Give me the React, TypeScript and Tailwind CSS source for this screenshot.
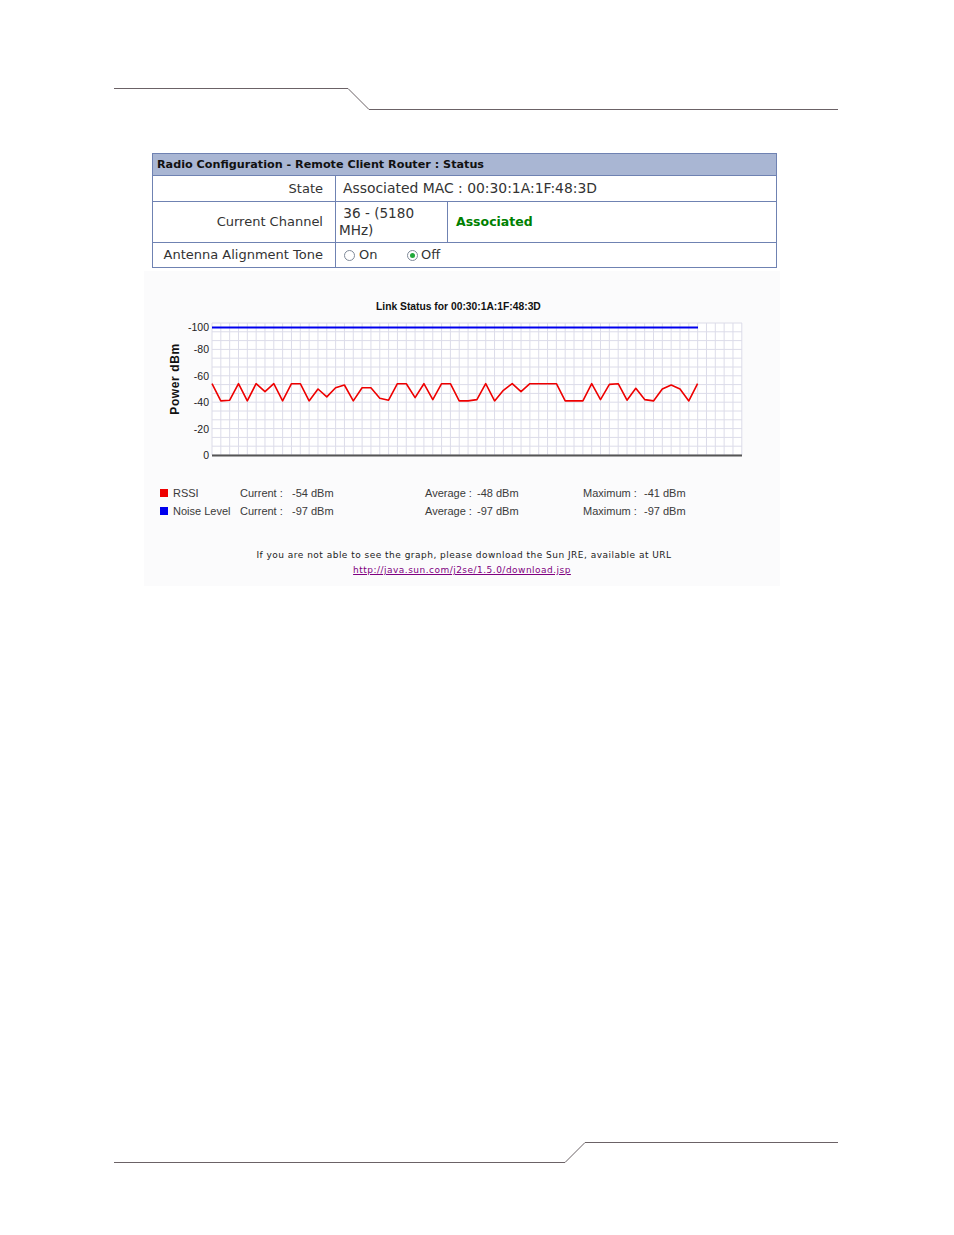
import React from 'react';

const rssi = [
  -54, -41, -41.5, -54, -41, -54, -48, -54, -41, -54, -54, -41, -50, -44, -51, -53, -41, -51, -51, -43,
  -41.5, -54, -54, -43.5, -54, -42, -54, -54, -41, -41, -42, -54, -41, -49, -54, -48, -54, -54, -54, -54,
  -41, -41, -41, -54, -42, -53.5, -54, -41.5, -50.5, -42, -41, -50, -53, -50, -41, -54,
];

const X0 = 212;
const STEP = 8.83;
const yOf = (v: number) => 454 + v * 1.32;

const LinkChart: React.FC = () => {
  const vLines = Array.from({ length: 61 }, (_, i) => X0 + i * STEP);
  const hLines = Array.from({ length: 16 }, (_, i) => 322 + i * 8.8);
  const redPts = rssi.map((v, i) => `${(X0 + i * STEP).toFixed(1)},${yOf(v).toFixed(1)}`).join(' ');
  const ticks = [
    { label: '-100', y: 326 },
    { label: '-80', y: 348.4 },
    { label: '-60', y: 374.8 },
    { label: '-40', y: 401.2 },
    { label: '-20', y: 427.6 },
    { label: '0', y: 454 },
  ];

  return (
    <svg width="636" height="150" viewBox="144 315 636 150" className="block">
      <rect x={X0} y={322} width={530} height={132} fill="#ffffff" />
      {vLines.map((x, i) => (
        <line key={`v${i}`} x1={x} y1={322} x2={x} y2={454} stroke="#dcdce9" strokeWidth="1" />
      ))}
      {hLines.map((y, i) => (
        <line key={`h${i}`} x1={X0} y1={y} x2={742} y2={y} stroke="#dcdce9" strokeWidth="1" />
      ))}
      <line x1={X0} y1={454.5} x2={742} y2={454.5} stroke="#555555" strokeWidth="2" />
      <line x1={X0} y1={326.5} x2={698} y2={326.5} stroke="#0000ee" strokeWidth="2" />
      <polyline points={redPts} fill="none" stroke="#ee0000" strokeWidth="1.6" strokeLinejoin="round" />
      {ticks.map((t) => (
        <text
          key={t.label}
          x={209}
          y={t.y + 4}
          textAnchor="end"
          fontSize="10.5"
          fill="#222"
          fontFamily="'Liberation Sans', Arial, sans-serif"
        >
          {t.label}
        </text>
      ))}
      <text
        x={179}
        y={378}
        transform="rotate(-90 179 378)"
        textAnchor="middle"
        fontSize="12"
        fontWeight="bold"
        fill="#111"
        letterSpacing="0.6"
        fontFamily="'Liberation Sans', Arial, sans-serif"
      >
        Power dBm
      </text>
    </svg>
  );
};

const Radio: React.FC<{ checked?: boolean }> = ({ checked }) => (
  <span className="inline-flex items-center justify-center w-[11px] h-[11px] rounded-full border border-[#7f8a99] bg-white">
    {checked && <span className="w-[5px] h-[5px] rounded-full bg-[#22a83a]" />}
  </span>
);

const LegendRow: React.FC<{ color: string; name: string; cur: string; avg: string; max: string }> = ({
  color,
  name,
  cur,
  avg,
  max,
}) => (
  <div className="flex items-center h-[18px] pl-4 text-[11px] text-[#3a3a3a]">
    <span className={`w-[8px] h-[8px] ${color}`} />
    <span className="w-[72px] pl-[5px]">{name}</span>
    <span className="w-[52px]">Current :</span>
    <span className="w-[133px]">{cur}</span>
    <span className="w-[52px]">Average :</span>
    <span className="w-[106px]">{avg}</span>
    <span className="w-[61px]">Maximum :</span>
    <span>{max}</span>
  </div>
);

export default function App() {
  return (
    <div className="w-[954px] h-[1235px] bg-white flex flex-col">
      {/* page header rule */}
      <svg width="954" height="120" className="block shrink-0">
        <polyline points="114,88.5 348,88.5 369,109.5 838,109.5" fill="none" stroke="#6b6266" strokeWidth="1" />
      </svg>

      {/* status table */}
      <table
        className="mt-[33px] ml-[152px] w-[625px] border-collapse text-[#333] shrink-0"
        style={{ fontFamily: "'DejaVu Sans', Verdana, sans-serif" }}
      >
        <tbody>
          <tr className="h-[22px] bg-[#a9b6d3]">
            <td colSpan={3} className="border border-[#6f82b2] px-[4px] pt-[1px] text-[11.2px] font-bold text-[#111] leading-none">
              Radio Configuration - Remote Client Router : Status
            </td>
          </tr>
          <tr className="h-[26px]">
            <td className="w-[183px] border border-[#6f82b2] pr-[12px] text-right text-[13px]">State</td>
            <td colSpan={2} className="border border-[#6f82b2] pl-[7px] text-[13.9px]">
              Associated MAC : 00:30:1A:1F:48:3D
            </td>
          </tr>
          <tr className="h-[41px]">
            <td className="border border-[#6f82b2] pr-[12px] text-right text-[13px]">Current Channel</td>
            <td className="w-[112px] border border-[#6f82b2] pl-[3px] text-[13.6px] leading-[17px]">
              &nbsp;36 - (5180 MHz)
            </td>
            <td className="border border-[#6f82b2] pl-[8px] text-[12.5px] font-bold text-[#008000]">Associated</td>
          </tr>
          <tr className="h-[25px]">
            <td className="border border-[#6f82b2] pr-[12px] text-right text-[13px]">Antenna Alignment Tone</td>
            <td colSpan={2} className="border border-[#6f82b2] pl-[8px] text-[13px]">
              <div className="flex items-center">
                <Radio />
                <span className="ml-[4px] w-[48px]">On</span>
                <Radio checked />
                <span className="ml-[3px]">Off</span>
              </div>
            </td>
          </tr>
        </tbody>
      </table>

      {/* link status chart panel */}
      <div
        className="mt-[3px] ml-[144px] w-[636px] bg-[#fbfbfc] pt-[29px] pb-[9px] shrink-0"
        style={{ fontFamily: "'Liberation Sans', Arial, sans-serif" }}
      >
        <div className="h-[13px] pl-[232px] text-[10.3px] font-bold leading-[13px] text-[#111]">
          Link Status for 00:30:1A:1F:48:3D
        </div>
        <div className="mt-[3px]">
          <LinkChart />
        </div>
        <div className="mt-[18px]">
          <LegendRow color="bg-[#ee0000]" name="RSSI" cur="-54 dBm" avg="-48 dBm" max="-41 dBm" />
          <LegendRow color="bg-[#0000ee]" name="Noise Level" cur="-97 dBm" avg="-97 dBm" max="-97 dBm" />
        </div>
        <div
          className="mt-[28px] text-center text-[9px] leading-[14px] tracking-[0.48px] text-[#222]"
          style={{ fontFamily: "'DejaVu Sans', Verdana, sans-serif" }}
        >
          <p className="pl-[4px]">If you are not able to see the graph, please download the Sun JRE, available at URL</p>
          <p className="mt-[1px]">
            <a href="#" className="text-[#800080] underline">
              http://java.sun.com/j2se/1.5.0/download.jsp
            </a>
          </p>
        </div>
      </div>

      {/* page footer rule */}
      <svg width="954" height="105" className="block mt-auto shrink-0">
        <polyline points="114,32.5 565,32.5 585,12.5 838,12.5" fill="none" stroke="#6b6266" strokeWidth="1" />
      </svg>
    </div>
  );
}
